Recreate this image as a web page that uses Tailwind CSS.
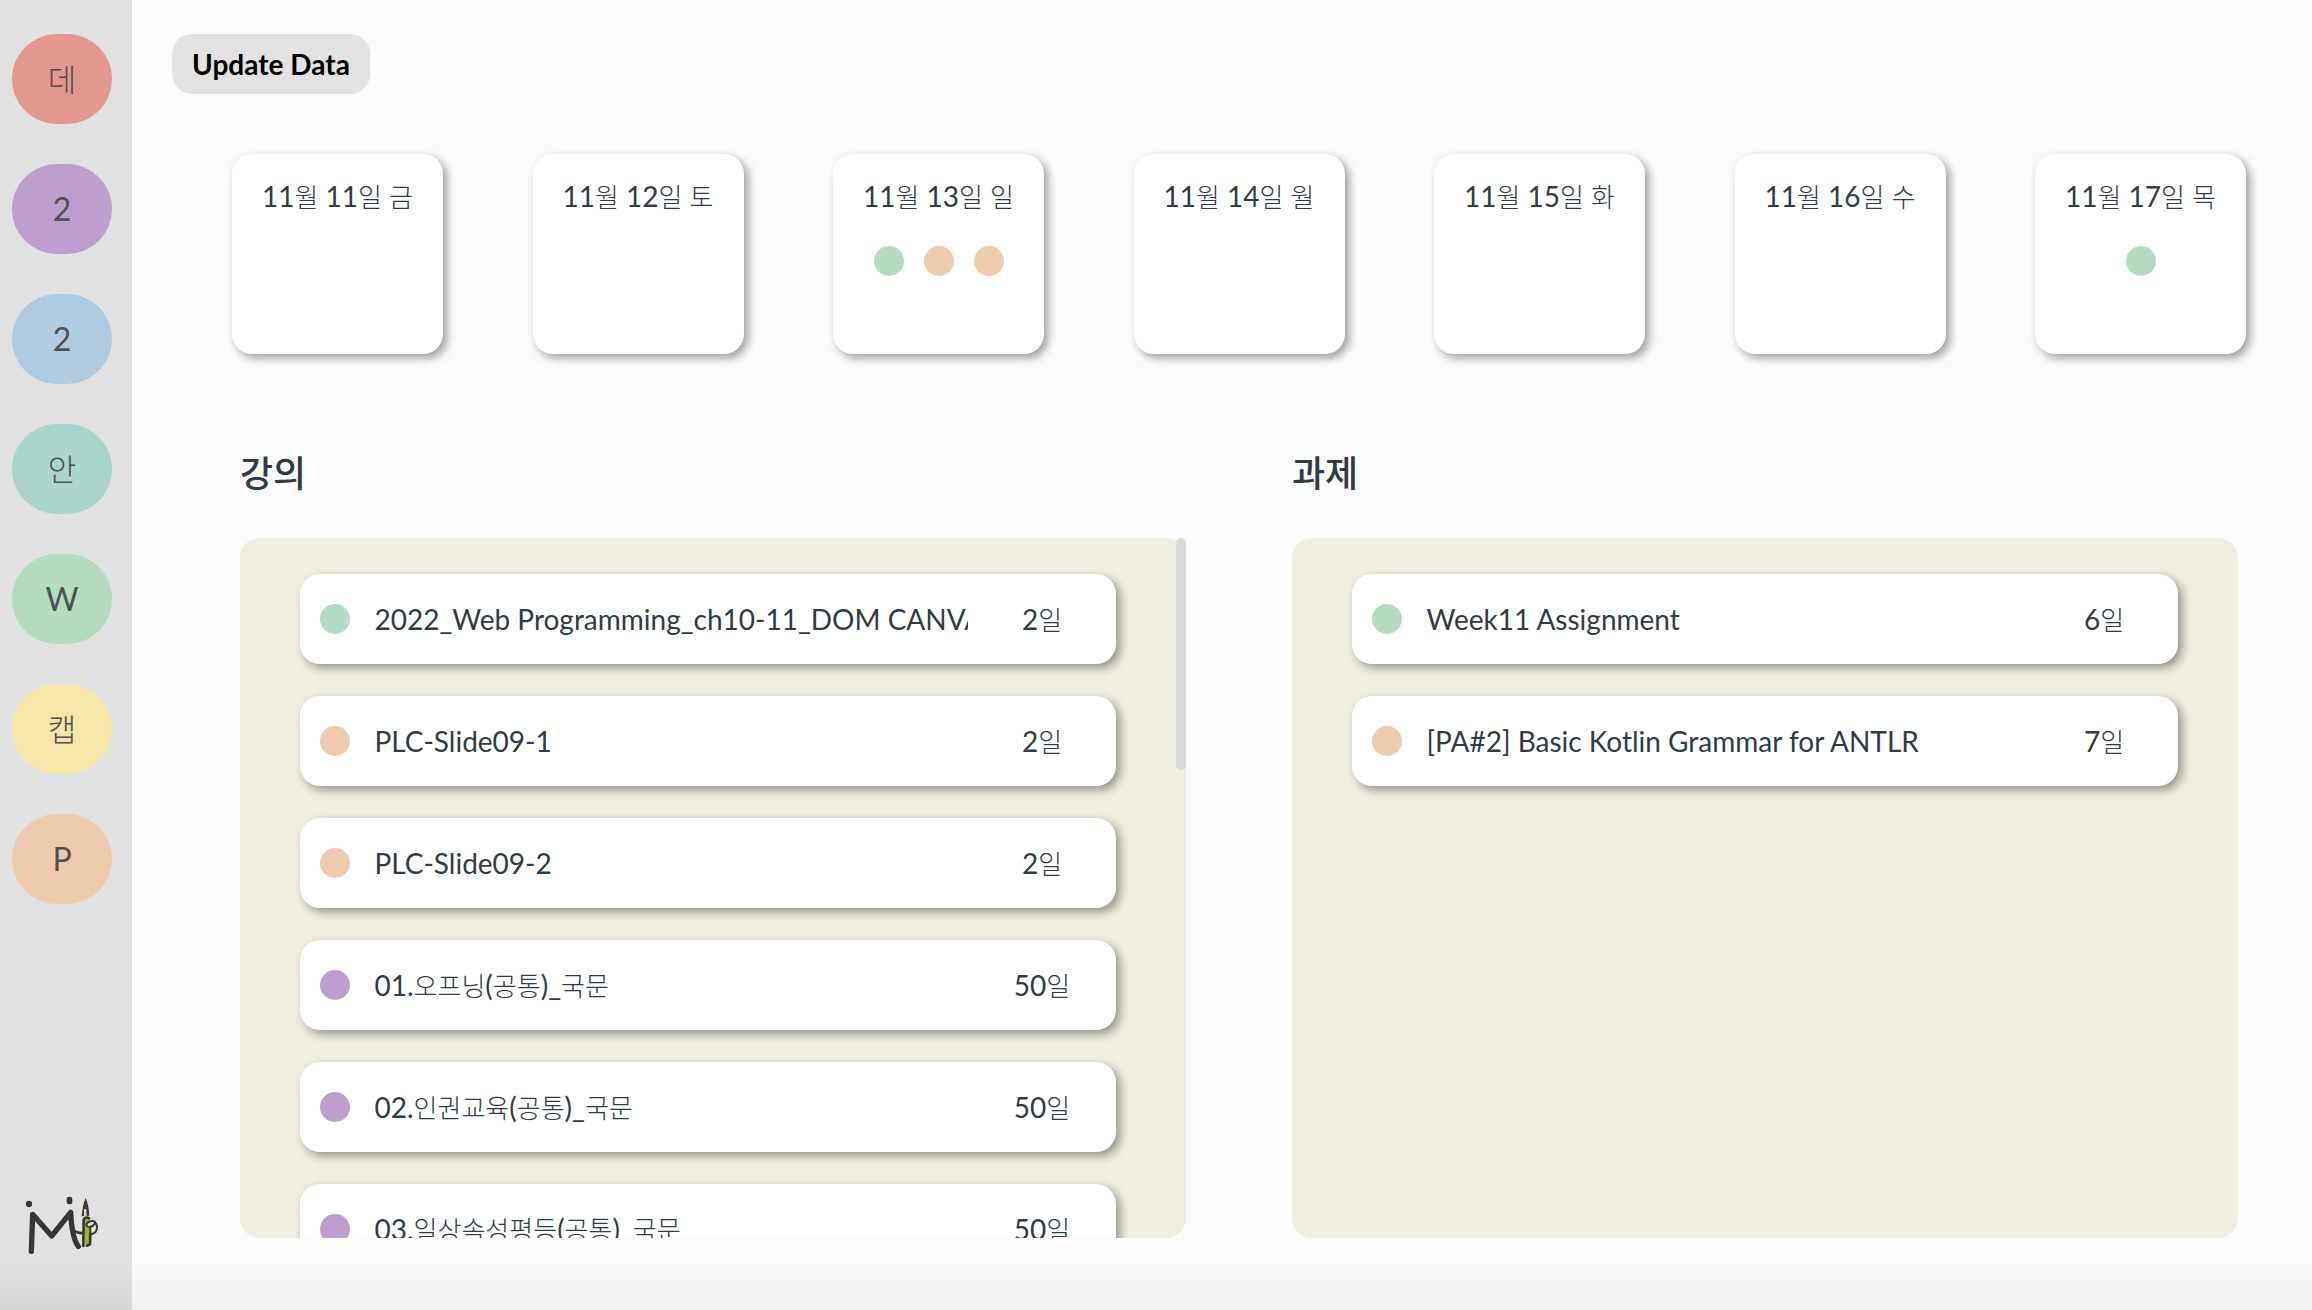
<!DOCTYPE html>
<html lang="ko">
<head>
<meta charset="utf-8">
<title>Dashboard</title>
<script src="https://cdn.jsdelivr.net/npm/@tailwindcss/browser@4"></script>
</head>
<body class="relative flex h-[1310px] w-[2312px] overflow-hidden bg-[#fbfbfb] font-[Lato,'Noto_Sans_CJK_KR',sans-serif] text-[28px] leading-[34px] text-[#2f3c47]">
  <aside class="flex w-[132px] shrink-0 flex-col justify-between bg-[#e1e1e1] pt-[34px] pb-[53px] pl-3">
    <nav id="courses" class="flex flex-col gap-10 text-[32px] text-[#505050]"></nav>
    <svg class="ml-[10px] h-[62px] w-20" viewBox="66 75 240 186" fill="none" stroke="#373737" stroke-linecap="round" stroke-linejoin="round">
      <circle cx="87" cy="102" r="9.500" fill="#373737" stroke="none"/>
      <rect x="200" y="80" width="17" height="23" rx="7" fill="#373737" stroke="none"/>
      <path d="M94 244L98 133L155 198L212 127C214 168 219 208 235 229" stroke-width="16"/>
      <path d="M224 183Q234 190 246 189" stroke-width="8"/>
      <path d="M254 146L268 146L268 222L254 226Z" fill="#97b92c" stroke="none"/>
      <path d="M250 228L251 150Q257 138 267 145M271 190L270 223L261 227" stroke-width="8"/>
      <path d="M245 139Q248 104 257 84Q266 104 268 137Z" fill="#373737" stroke="none"/>
      <path d="M252 138L252 118Q257 114 259 120L260 138Z" fill="#f3d3a6" stroke="none"/>
      <path d="M284 156C296 168 293 190 272 193L270 172" fill="#e1e1e1" stroke-width="6"/>
      <path d="M259 164C262 153 281 150 285 156C287 162 276 172 266 171Q260 170 259 164Z" fill="#e1e1e1" stroke-width="6"/>
    </svg>
  </aside>

  <main class="flex flex-1 flex-col pt-[34px]">
    <button class="ml-10 h-[60px] w-[198px] rounded-[20px] bg-[#e3e1e2] text-[28px] font-bold text-black">Update Data</button>
    <section id="week" class="mt-[60px] mr-[66px] ml-[100px] flex justify-between"></section>
    <div class="mt-[97px] ml-[108px] flex gap-[106px]">
      <section class="w-[946px]">
        <h2 class="h-[87px] text-[36px] leading-[45px] font-medium">강의</h2>
        <div class="h-[700px] overflow-hidden rounded-[20px] bg-[#efede0]">
          <ul id="lectures" class="flex flex-col gap-8 py-9 pr-[70px] pl-[60px]"></ul>
        </div>
      </section>
      <section class="w-[946px]">
        <h2 class="h-[87px] text-[36px] leading-[45px] font-medium">과제</h2>
        <div class="h-[700px] overflow-hidden rounded-[20px] bg-[#efede0]">
          <ul id="tasks" class="flex flex-col gap-8 px-[60px] py-9"></ul>
        </div>
      </section>
    </div>
  </main>
  <div class="absolute top-[538px] left-[1176px] h-[232px] w-[10px] rounded-full bg-[#d9d9d9]"></div>
  <div class="absolute inset-x-0 bottom-0 h-[50px] bg-linear-to-b from-black/0 to-black/5"></div>

<script>
  const color = {
    red: 'bg-[#e4988d]', purple: 'bg-[#bd9fcf]', blue: 'bg-[#afcbe1]', teal: 'bg-[#abd6cd]',
    green: 'bg-[#b3dcc1]', yellow: 'bg-[#f6e6a8]', orange: 'bg-[#eecbac]',
  };
  const ko = (s, size = 'text-[26px]') => s.replace(/[가-힣]+/g, `<span class="${size} font-light">$&</span>`);
  const dot = (c) => `<i class="size-[30px] shrink-0 rounded-full ${color[c]}"></i>`;

  document.getElementById('courses').innerHTML = [
    ['데', 'red'], ['2', 'purple'], ['2', 'blue'], ['안', 'teal'], ['W', 'green'], ['캡', 'yellow'], ['P', 'orange'],
  ].map(([t, c]) => `<a class="flex h-[90px] w-[100px] items-center justify-center rounded-[45px] ${color[c]}">${ko(t, 'text-[31px]')}</a>`).join('');

  document.getElementById('week').innerHTML = [
    ['11월 11일 금', []], ['11월 12일 토', []], ['11월 13일 일', ['green', 'orange', 'orange']],
    ['11월 14일 월', []], ['11월 15일 화', []], ['11월 16일 수', []], ['11월 17일 목', ['green']],
  ].map(([d, dots]) => `<article class="h-[200px] w-[211px] rounded-[20px] bg-white pt-[25px] text-center shadow-[4px_4px_10px_rgba(0,0,0,0.38)]">
      <p class="h-[34px] whitespace-nowrap">${ko(d)}</p>
      <div class="mt-[33px] flex justify-center gap-5">${dots.map(dot).join('')}</div>
    </article>`).join('');

  const row = ([c, t, d]) => `<li class="flex h-[90px] shrink-0 items-center rounded-[20px] bg-white pr-[24px] pl-5 shadow-[4px_4px_10px_rgba(0,0,0,0.38)]">
      ${dot(c)}
      <span class="ml-[24.500px] flex-1 overflow-hidden whitespace-nowrap">${ko(t)}</span>
      <span class="ml-[24px] w-[100px] shrink-0 text-center">${ko(d)}</span>
    </li>`;
  document.getElementById('lectures').innerHTML = [
    ['green', '2022_Web Programming_ch10-11_DOM CANVAS', '2일'],
    ['orange', 'PLC-Slide09-1', '2일'],
    ['orange', 'PLC-Slide09-2', '2일'],
    ['purple', '01.오프닝(공통)_국문', '50일'],
    ['purple', '02.인권교육(공통)_국문', '50일'],
    ['purple', '03.일상속성평등(공통)_국문', '50일'],
  ].map(row).join('');
  document.getElementById('tasks').innerHTML = [
    ['green', 'Week11 Assignment', '6일'],
    ['orange', '[PA#2] Basic Kotlin Grammar for ANTLR', '7일'],
  ].map(row).join('');
</script>
</body>
</html>
